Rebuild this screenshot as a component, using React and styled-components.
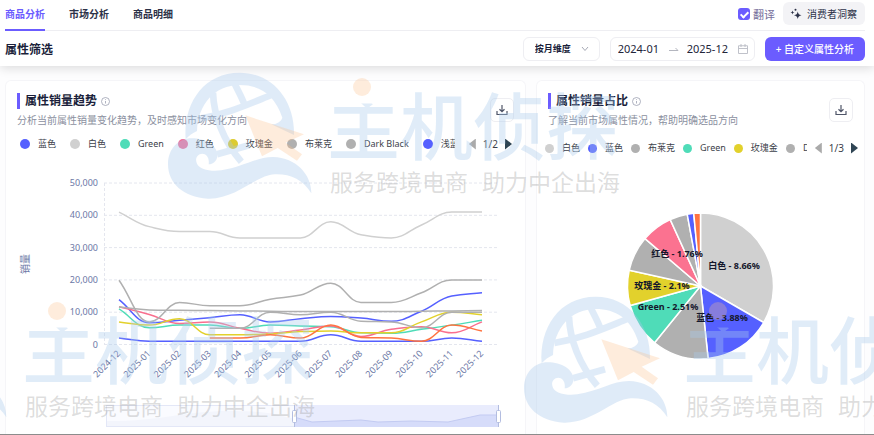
import * as React from 'react'
import styled, { createGlobalStyle, ThemeProvider } from 'styled-components'

const theme = {
  primary: '#6b5cff',
  ink: '#1b1f3b',
  muted: '#8b90a0',
  axis: '#6c78a6',
  line: '#eeeef2',
  font: '"Noto Sans", "Noto Sans CJK SC", sans-serif',
}

const GlobalStyle = createGlobalStyle`
  * {
    box-sizing: border-box;
  }
  body {
    margin: 0;
    background: #fdfdfe;
    color: ${theme.ink};
    font-family: ${theme.font};
    font-size: 10px;
  }
  button, input, select {
    font-family: inherit;
  }
  h1, h2, p, ul {
    margin: 0;
    padding: 0;
  }
`

const Page = styled.div`
  position: relative;
  display: flex;
  flex-direction: column;
  min-height: 100vh;
  overflow: hidden;
  border-bottom: 1px solid #8c8c8c;
`

const Header = styled.header`
  background: #fff;
  padding: 0 9px 0 5px;
  box-shadow: 0 2px 10px rgba(0, 0, 0, 0.14);
`

const TopBar = styled.div`
  display: flex;
  justify-content: space-between;
  height: 31px;
  border-bottom: 1px solid ${props => props.theme.line};
`

const Tabs = styled.nav`
  display: flex;
  gap: 24px;
`

const Tab = styled.a`
  height: 31px;
  line-height: 28px;
  font-size: 10px;
  font-weight: 700;
  text-decoration: none;
  color: ${props => (props.$active ? props.theme.primary : '#2c3148')};
  border-bottom: 2px solid
    ${props => (props.$active ? props.theme.primary : 'transparent')};
`

const Tools = styled.div`
  display: flex;
  align-items: center;
  gap: 8px;
  padding-bottom: 3px;
`

const CheckLabel = styled.label`
  display: flex;
  align-items: center;
  gap: 3px;
  font-size: 11px;
  color: #77709c;
`

const Check = styled.input`
  appearance: none;
  display: grid;
  place-items: center;
  width: 12px;
  height: 12px;
  margin: 0;
  border-radius: 3px;
  background: ${props => props.theme.primary};
  &:checked::after {
    content: '';
    width: 3px;
    height: 6px;
    border: solid #fff;
    border-width: 0 2px 2px 0;
    transform: rotate(45deg);
  }
`

const GhostButton = styled.button`
  display: flex;
  align-items: center;
  gap: 5px;
  height: 23px;
  padding: 0 8px 0 7px;
  border: 0;
  border-radius: 6px;
  background: #f3f3f6;
  color: #2c3148;
  font-size: 10px;
`

const FilterBar = styled.div`
  display: flex;
  align-items: center;
  gap: 10px;
  height: 35px;
`

const FilterTitle = styled.h1`
  flex: 1;
  font-size: 12px;
  font-weight: 700;
`

const Field = styled.div`
  display: flex;
  align-items: center;
  gap: 8px;
  height: 24px;
  border: 1px solid ${props => props.theme.line};
  border-radius: 6px;
  background: #fff;
`

const SelectField = styled(Field)`
  padding: 0 10px 0 11px;
`

const Select = styled.select`
  appearance: none;
  width: 38px;
  padding: 0;
  border: 0;
  background: transparent;
  color: ${props => props.theme.ink};
  font-size: 9px;
  font-weight: 700;
`

const RangeField = styled(Field)`
  padding: 0 6px 0 7px;
`

const DateInput = styled.input`
  width: 43px;
  padding: 0;
  border: 0;
  background: transparent;
  color: #22263a;
  font-size: 11px;
`

const PrimaryButton = styled.button`
  height: 24px;
  padding: 0 11px;
  border: 0;
  border-radius: 6px;
  background: ${props => props.theme.primary};
  color: #fff;
  font-size: 10px;
  font-weight: 500;
`

const Board = styled.main`
  flex: 1;
  display: grid;
  grid-template-columns: 521fr 329fr;
  gap: 10px;
  padding: 14px 9px 0 5px;
`

const Card = styled.section`
  min-width: 0;
  border: 1px solid #f5f5f8;
  border-bottom: 0;
  border-radius: 6px 6px 0 0;
  background: #fff;
`

const CardHead = styled.div`
  display: flex;
  justify-content: space-between;
  align-items: flex-start;
  padding: 12px 11px 0;
`

const CardTitle = styled.h2`
  display: flex;
  align-items: center;
  gap: 4px;
  height: 16px;
  padding-left: 5px;
  border-left: 3px solid ${props => props.theme.primary};
  font-size: 12px;
  font-weight: 700;
  line-height: 16px;
`

const CardNote = styled.p`
  color: ${props => props.theme.muted};
  font-size: 10px;
  line-height: 22px;
`

const IconButton = styled.button`
  display: grid;
  place-items: center;
  width: 24px;
  height: 24px;
  margin-top: 5px;
  padding: 0;
  border: 1px solid ${props => props.theme.line};
  border-radius: 5px;
  background: #fff;
  color: #4f5568;
`

const LegendBar = styled.div`
  display: flex;
  align-items: center;
  gap: ${props => (props.$dense ? '8px' : '14px')};
  height: ${props => (props.$dense ? '34px' : '26px')};
  padding: ${props => (props.$dense ? '0 6px 0 8px' : '0 13px 0 14px')};
`

const LegendList = styled.ul`
  display: flex;
  flex: 1;
  gap: ${props => (props.$dense ? '8px' : '14px')};
  min-width: 0;
  overflow: hidden;
  list-style: none;
`

const LegendItem = styled.li`
  display: flex;
  flex: none;
  align-items: center;
  gap: 8px;
  color: #3c3f4a;
  font-size: 9px;
  line-height: 14px;
  &::before {
    content: '';
    width: ${props => (props.$dense ? '9px' : '10px')};
    height: ${props => (props.$dense ? '9px' : '10px')};
    border-radius: 50%;
    background: ${props => props.$color};
  }
`

const Pager = styled.div`
  display: flex;
  align-items: center;
  gap: 7px;
  color: #3c3f4a;
  font-size: 10px;
`

const PagerButton = styled.button`
  width: 7px;
  height: 11px;
  padding: 0;
  border: 0;
  background: ${props => (props.disabled ? '#aaaaaa' : '#2f4554')};
  clip-path: ${props =>
    props.$back
      ? 'polygon(100% 0, 100% 100%, 0 50%)'
      : 'polygon(0 0, 100% 50%, 0 100%)'};
`

const Chart = styled.svg`
  display: block;
  width: 100%;
  height: auto;
  font-family: ${props => props.theme.font};
`

const WatermarkLayer = styled.div`
  position: absolute;
  inset: 0;
  overflow: hidden;
  pointer-events: none;
`

const Mark = styled.div`
  position: absolute;
  left: ${props => props.$x}px;
  top: ${props => props.$y}px;
  display: flex;
  gap: 14px;
`

const MarkText = styled.div`
  position: relative;
  padding-top: 18px;
  white-space: nowrap;
`

const MarkDot = styled.i`
  position: absolute;
  left: 26px;
  top: 7px;
  width: 18px;
  height: 18px;
  border-radius: 50%;
  background: rgba(251, 191, 138, 0.3);
`

const MarkName = styled.div`
  display: flex;
  color: rgba(169, 201, 236, 0.36);
  font-size: 73px;
  font-weight: 500;
  line-height: 73px;
  span:first-child {
    clip-path: inset(20% 0 0 0);
  }
`

const MarkSlogan = styled.div`
  display: flex;
  gap: 14px;
  padding: 8px 0 0 3px;
  color: rgba(150, 150, 150, 0.32);
  font-size: 23px;
  line-height: 24px;
`

const lineSeries = [
  { color: '#d0d0d0', data: [41000, 36500, 35000, 35000, 33000, 33000, 33000, 38000, 34000, 33000, 37000, 41000, 41000] },
  { color: '#4fdcb8', data: [11000, 5200, 6000, 6000, 5000, 6000, 5700, 5500, 3600, 3500, 4700, 6000, 7500] },
  { color: '#5560ff', data: [13900, 6700, 7500, 8300, 9200, 7000, 8000, 8700, 8200, 7200, 10300, 15000, 16000] },
  { color: '#f96f8e', data: [11700, 9300, 6500, 7000, 5000, 3500, 4500, 5700, 2500, 4700, 5500, 3600, 7000] },
  { color: '#e2d12c', data: [7000, 6000, 8000, 3000, 3000, 3300, 4000, 4200, 3600, 3600, 7000, 10000, 9200] },
  { color: '#b0b0b0', data: [19900, 7000, 13000, 12000, 12000, 14000, 15300, 19000, 13000, 13000, 16000, 20000, 20000] },
  { color: '#b0b0b0', data: [11600, 10700, 10600, 10500, 10400, 10300, 10200, 10200, 10200, 10200, 10300, 10400, 10500] },
  { color: '#b0b0b0', from: 3, data: [5000, 5000, 10000, 9200, 10000, 7200, 7000, 5200, 10000, 10000] },
  { color: '#5560ff', data: [2000, 1000, 1000, 1000, 1000, 1000, 1000, 3000, 1000, 1000, 1000, 2000, 1000] },
  { color: '#ff7340', from: 3, data: [2000, 2000, 3000, 2000, 6000, 2200, 2000, 1000, 6000, 4200] },
]

const months = [
  '2024-12', '2025-01', '2025-02', '2025-03', '2025-04', '2025-05', '2025-06',
  '2025-07', '2025-08', '2025-09', '2025-10', '2025-11', '2025-12',
]

const lineLegend = [
  ['蓝色', '#5560ff'],
  ['白色', '#d0d0d0'],
  ['Green', '#4fdcb8'],
  ['红色', '#f0709a'],
  ['玫瑰金', '#dccb30'],
  ['布莱克', '#b0b0b0'],
  ['Dark Black', '#b0b0b0'],
  ['浅蓝', '#5560ff'],
]

const pieLegend = [
  ['白色', '#d0d0d0'],
  ['蓝色', '#5560ff'],
  ['布莱克', '#b0b0b0'],
  ['Green', '#4fdcb8'],
  ['玫瑰金', '#e2d12c'],
  ['Dark Black', '#b0b0b0'],
]

// end angle of each slice, clockwise from the top
const slices = [
  [120, '#d0d0d0'],
  [174, '#5560ff'],
  [219, '#b0b0b0'],
  [254.5, '#4fdcb8'],
  [282.5, '#e2d12c'],
  [310.5, '#b0b0b0'],
  [335.5, '#fb7290'],
  [349.5, '#b0b0b0'],
  [354.7, '#5560ff'],
  [360, '#ff7340'],
]

const pieLabels = [
  ['白色 - 8.66%', 197, 106],
  ['红色 - 1.76%', 140, 94],
  ['玫瑰金 - 2.1%', 125, 126],
  ['Green - 2.51%', 131, 147],
  ['蓝色 - 3.88%', 185, 158],
]

const xAt = i => 113 + i * 30.25
const yAt = v => 189.5 - (v / 10000) * 32.3

// monotone cubic through the points
const smoothPath = pts => {
  const slope = pts.slice(1).map((p, i) => (p[1] - pts[i][1]) / (p[0] - pts[i][0]))
  const tangent = pts.map((p, i) => {
    if (i === 0) return slope[0]
    if (i === pts.length - 1) return slope[i - 1]
    const a = slope[i - 1]
    const b = slope[i]
    return a * b <= 0 ? 0 : (2 * a * b) / (a + b)
  })
  return pts.reduce((d, [x, y], i) => {
    if (i === 0) return `M${x} ${y}`
    const [px, py] = pts[i - 1]
    const h = (x - px) / 2.4
    return `${d}C${px + h} ${py + tangent[i - 1] * h} ${x - h} ${y - tangent[i] * h} ${x} ${y}`
  }, '')
}

const slicePath = (from, to, cx, cy, r) => {
  const point = deg => {
    const rad = (deg * Math.PI) / 180
    return `${cx + r * Math.sin(rad)} ${cy - r * Math.cos(rad)}`
  }
  return `M${cx} ${cy}L${point(from)}A${r} ${r} 0 0 1 ${point(to)}Z`
}

const InfoIcon = () => (
  <svg width="9" height="9" viewBox="0 0 18 18" fill="none" stroke="#9a9eb0" strokeWidth="1.6">
    <circle cx="9" cy="9" r="8" />
    <path d="M9 8v5M9 4.5v1.6" />
  </svg>
)

const DownloadIcon = () => (
  <svg width="12" height="12" viewBox="0 0 24 24" fill="none" stroke="currentColor" strokeWidth="2.4">
    <path d="M12 2v13M7 10.5l5 5 5-5M2 14v7h20v-7" />
  </svg>
)

const SparkIcon = () => (
  <svg width="12" height="12" viewBox="0 0 24 24" fill="#2c3148">
    <path d="M15.5 7c1 5 2.500 6.500 7.500 7.500-5 1-6.500 2.500-7.500 7.500-1-5-2.500-6.500-7.500-7.500 5-1 6.500-2.500 7.500-7.500Z" />
    <path d="M5 5c.6 2.800 1.200 3.400 4 4-2.800.6-3.400 1.200-4 4-.6-2.800-1.200-3.400-4-4 2.800-.6 3.400-1.200 4-4Z" />
    <circle cx="11" cy="3.5" r="2" />
  </svg>
)

const ChevronIcon = () => (
  <svg width="8" height="6" viewBox="0 0 8 6" fill="none" stroke="#a6a9b5">
    <path d="M1 1l3 3.500L7 1" />
  </svg>
)

const ArrowIcon = () => (
  <svg width="10" height="6" viewBox="0 0 10 6" fill="none" stroke="#b4b6bf">
    <path d="M0 4.500h9L6.500 2" />
  </svg>
)

const CalendarIcon = () => (
  <svg width="10" height="10" viewBox="0 0 20 20" fill="none" stroke="#b9bbc4" strokeWidth="1.8">
    <path d="M1 3.500h18V19H1zM1 9h18M6 0v6M14 0v6" />
  </svg>
)

const Emblem = () => (
  <svg width="146" height="130" viewBox="22 20 438 390">
    <g opacity="0.36" fill="none" stroke="#a9c9ec" strokeWidth="20">
      <path
        fill="#a9c9ec"
        stroke="none"
        d="M78 225C70 120 130 25 240 25C340 25 406 110 403 212L335 180C352 180 364 172 368 160C345 90 300 62 240 62C165 62 115 120 112 200C98 206 88 214 78 225Z"
      />
      <path d="M160 85C162 150 190 230 245 292M116 164C200 150 265 120 335 92M225 58C235 80 245 96 254 120M172 270L268 243" />
      <path
        fill="#a9c9ec"
        stroke="none"
        d="M25 300C25 250 60 222 95 222C140 222 175 245 173 275C172 290 160 300 147 300C150 280 140 268 128 268C112 268 105 285 112 298C120 315 150 322 185 318C250 308 290 278 340 278C410 280 455 330 455 387C430 345 390 328 345 330C290 332 230 405 145 403C70 400 25 355 25 300Z"
      />
    </g>
    <path
      fill="#fbbf8a"
      opacity="0.3"
      d="M257 153L433 210L378 235L427 270L412 289L354 251L307 276Z"
    />
  </svg>
)

const Watermark = ({ x, y }) => (
  <Mark $x={x} $y={y}>
    <Emblem />
    <MarkText>
      <MarkDot />
      <MarkName>
        <span>主</span>
        <span>机侦探</span>
      </MarkName>
      <MarkSlogan>
        <span>服务跨境电商</span>
        <span>助力中企出海</span>
      </MarkSlogan>
    </MarkText>
  </Mark>
)

const Legend = ({ items, dense, pages }) => (
  <LegendBar $dense={dense}>
    <LegendList $dense={dense}>
      {items.map(([name, color]) => (
        <LegendItem key={name} $color={color} $dense={dense}>
          {name}
        </LegendItem>
      ))}
    </LegendList>
    <Pager>
      <PagerButton $back disabled aria-label="上一页" />
      <span>{pages}</span>
      <PagerButton aria-label="下一页" />
    </Pager>
  </LegendBar>
)

const CardHeader = ({ title, note }) => (
  <CardHead>
    <div>
      <CardTitle>
        {title}
        <InfoIcon />
      </CardTitle>
      <CardNote>{note}</CardNote>
    </div>
    <IconButton aria-label="下载">
      <DownloadIcon />
    </IconButton>
  </CardHead>
)

const TrendChart = () => (
  <Chart viewBox="0 2 519 276">
    <g stroke="#e4e6ee" strokeDasharray="3 2">
      {[0, 10000, 20000, 30000, 40000, 50000].map(v => (
        <line key={v} x1="98" x2="493" y1={yAt(v)} y2={yAt(v)} />
      ))}
      <line x1="98.5" x2="98.5" y1={yAt(50000)} y2={yAt(0)} />
    </g>
    <g fill={theme.axis} fontSize="9">
      {[0, 10000, 20000, 30000, 40000, 50000].map(v => (
        <text key={v} x="92" y={yAt(v) + 3} textAnchor="end">
          {v.toLocaleString('en-US')}
        </text>
      ))}
      {months.map((m, i) => (
        <text
          key={m}
          textAnchor="end"
          transform={`translate(${xAt(i) + 2} 199) rotate(-45)`}
        >
          {m}
        </text>
      ))}
      <text fontSize="10" textAnchor="middle" transform="translate(23 109) rotate(-90)">
        销量
      </text>
    </g>
    <g fill="none" strokeWidth="1.5">
      {lineSeries.map((s, n) => (
        <path
          key={n}
          stroke={s.color}
          d={smoothPath(s.data.map((v, i) => [xAt(i + (s.from || 0)), yAt(v)]))}
        />
      ))}
    </g>
    <rect x="100.5" y="250.5" width="392" height="21" fill="#fafbff" stroke="#e3e7f7" />
    <path d="M101 266C160 266 180 255 230 256S270 262 288 263V271H101Z" fill="#f3f5fc" />
    <rect x="288" y="250" width="205" height="22" fill="#e9ecfd" />
    <path
      d="M288 262L306 267L355 265L372 267L405 266L442 267L474 260H493V272H288Z"
      fill="#d6dcfa"
    />
    <path d="M288 262L306 267L355 265L372 267L405 266L442 267L474 260H493" fill="none" stroke="#c3cbf2" />
    <g fill="#fff" stroke="#b3bde0">
      <path d="M288.500 250v22M492.500 250v22" />
      <rect x="286.5" y="255.5" width="4" height="12" rx="1" />
      <rect x="490.5" y="255.5" width="4" height="12" rx="1" />
    </g>
  </Chart>
)

const ShareChart = () => (
  <Chart viewBox="0 2 327 266">
    <g stroke="#fff" strokeWidth="1.5">
      {slices.map(([end, color], i) => (
        <path
          key={end}
          fill={color}
          d={slicePath(i ? slices[i - 1][0] : 0, end, 163.5, 123, 73)}
        />
      ))}
    </g>
    <g fill="#14172b" fontSize="9" fontWeight="700" textAnchor="middle">
      {pieLabels.map(([label, x, y]) => (
        <text key={label} x={x} y={y}>
          {label}
        </text>
      ))}
    </g>
  </Chart>
)

const App = () => (
  <ThemeProvider theme={theme}>
    <GlobalStyle />
    <Page>
      <Header>
        <TopBar>
          <Tabs>
            <Tab href="#product" $active>商品分析</Tab>
            <Tab href="#market">市场分析</Tab>
            <Tab href="#detail">商品明细</Tab>
          </Tabs>
          <Tools>
            <CheckLabel>
              <Check type="checkbox" defaultChecked />
              翻译
            </CheckLabel>
            <GhostButton>
              <SparkIcon />
              消费者洞察
            </GhostButton>
          </Tools>
        </TopBar>
        <FilterBar>
          <FilterTitle>属性筛选</FilterTitle>
          <SelectField>
            <Select aria-label="维度">
              <option>按月维度</option>
            </Select>
            <ChevronIcon />
          </SelectField>
          <RangeField>
            <DateInput aria-label="开始月份" defaultValue="2024-01" />
            <ArrowIcon />
            <DateInput aria-label="结束月份" defaultValue="2025-12" />
            <CalendarIcon />
          </RangeField>
          <PrimaryButton>+ 自定义属性分析</PrimaryButton>
        </FilterBar>
      </Header>
      <Board>
        <Card>
          <CardHeader
            title="属性销量趋势"
            note="分析当前属性销量变化趋势，及时感知市场变化方向"
          />
          <Legend items={lineLegend} pages="1/2" />
          <TrendChart />
        </Card>
        <Card>
          <CardHeader
            title="属性销量占比"
            note="了解当前市场属性情况，帮助明确选品方向"
          />
          <Legend items={pieLegend} pages="1/3" dense />
          <ShareChart />
        </Card>
      </Board>
      <WatermarkLayer>
        <Watermark x={167} y={71} />
        <Watermark x={-138} y={295} />
        <Watermark x={523} y={295} />
      </WatermarkLayer>
    </Page>
  </ThemeProvider>
)

export default App
